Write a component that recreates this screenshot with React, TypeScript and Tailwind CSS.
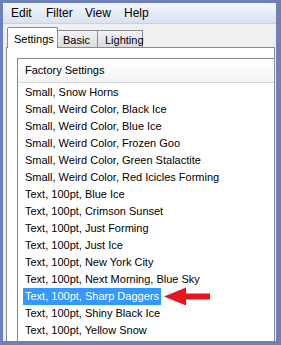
const ITEMS = [
  "Small, Snow Horns",
  "Small, Weird Color, Black Ice",
  "Small, Weird Color, Blue Ice",
  "Small, Weird Color, Frozen Goo",
  "Small, Weird Color, Green Stalactite",
  "Small, Weird Color, Red Icicles Forming",
  "Text, 100pt, Blue Ice",
  "Text, 100pt, Crimson Sunset",
  "Text, 100pt, Just Forming",
  "Text, 100pt, Just Ice",
  "Text, 100pt, New York City",
  "Text, 100pt, Next Morning, Blue Sky",
  "Text, 100pt, Sharp Daggers",
  "Text, 100pt, Shiny Black Ice",
  "Text, 100pt, Yellow Snow",
];

const SELECTED = 12;

function RedArrow() {
  return (
    <svg width="47" height="19" viewBox="0 0 47 19" className="ml-[3px] shrink-0">
      <polygon points="0,9.5 22,0.5 22,6.5 46,6.5 46,12.5 22,12.5 22,18.5" fill="#e8141b" />
    </svg>
  );
}

export default function App() {
  return (
    <div
      className="w-[281px] h-[345px] overflow-hidden bg-[#6c80b9] pl-[3px] pt-[3px] pr-[5px] pb-[4px]"
      style={{ fontFamily: '"Liberation Sans", Arial, sans-serif' }}
    >
      <div className="h-full flex flex-col bg-[#f0f0f0] overflow-hidden">
        {/* menu bar */}
        <div className="h-[21px] shrink-0 flex items-center pl-[8px] text-[12px] text-black bg-gradient-to-b from-[#f4f7fc] to-[#d9e2f2] border-b border-[#c9d2e2]">
          <span className="w-[35px]">Edit</span>
          <span className="w-[39px]">Filter</span>
          <span className="w-[39px]">View</span>
          <span>Help</span>
        </div>

        {/* tabs */}
        <div className="h-[24px] shrink-0 flex items-end pl-[4px] relative z-10 text-[11px] text-black">
          <div className="w-[51px] h-[21px] bg-white border-l border-t border-r border-[#898c95] rounded-t-[2px] pl-[6px] pt-[3px]">
            Settings
          </div>
          <div className="w-[40px] h-[17px] bg-gradient-to-b from-[#f3f3f3] to-[#dcdcdc] border-t border-r border-[#898c95] pl-[5px] pt-[1px] mb-px">
            Basic
          </div>
          <div className="w-[45px] h-[17px] bg-gradient-to-b from-[#f3f3f3] to-[#dcdcdc] border-t border-r border-[#898c95] pl-[7px] pt-[1px] mb-px">
            Lighting
          </div>
        </div>

        {/* tab panel */}
        <div className="flex-1 -mt-px ml-[3px] mr-[1px] bg-white border-l border-t border-r border-[#898c95] pl-[10px] pt-[10px]">
          <div className="h-full bg-white border-l border-t border-[#828790] text-[11px] text-black">
            <div className="h-[24px] flex items-center pl-[7px] bg-gradient-to-b from-white to-[#f4f4f4] border-b border-[#d5d5d5]">
              Factory Settings
            </div>
            <div className="pt-px">
              {ITEMS.map((item, i) => (
                <div key={item} className="h-[17px] flex items-center pl-[5px]">
                  {i === SELECTED ? (
                    <>
                      <span className="h-[17px] flex items-center px-[2px] bg-[#3399ff] text-white">{item}</span>
                      <RedArrow />
                    </>
                  ) : (
                    <span className="px-[2px]">{item}</span>
                  )}
                </div>
              ))}
            </div>
          </div>
        </div>
      </div>
    </div>
  );
}
